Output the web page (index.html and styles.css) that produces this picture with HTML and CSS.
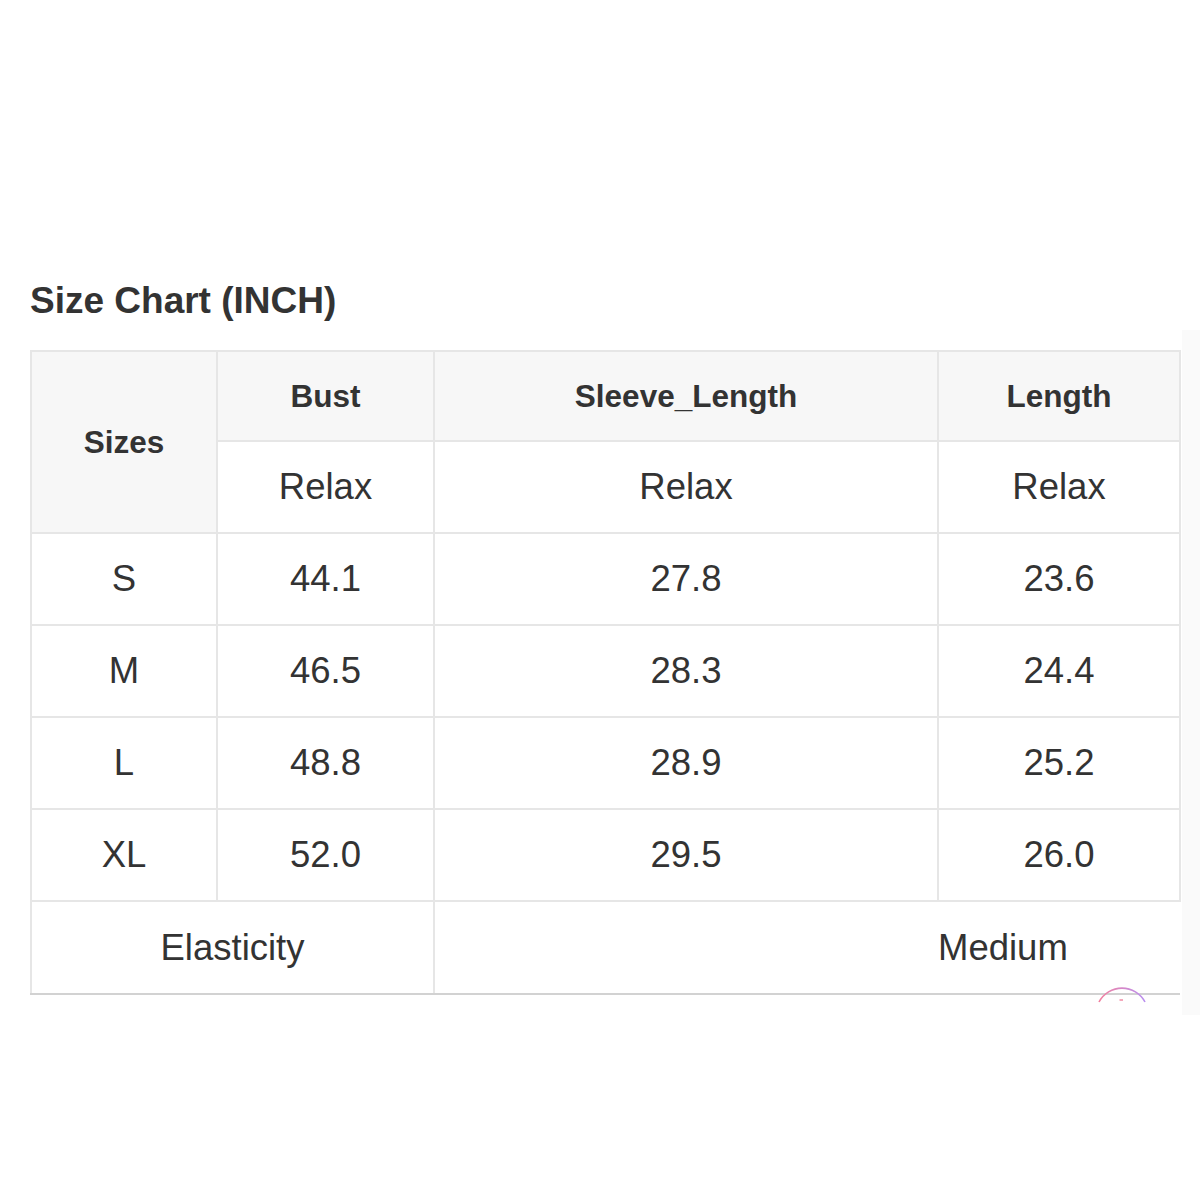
FILE: index.html
```html
<!DOCTYPE html>
<html>
<head>
<meta charset="utf-8">
<link rel="stylesheet" href="styles.css">
</head>
<body>
<main class="page">
  <h2 class="title">Size Chart (INCH)</h2>
  <div class="chart-box">
    <div class="table-clip">
      <table class="chart">
        <colgroup>
          <col class="c1"><col class="c2"><col class="c3"><col class="c4">
        </colgroup>
        <tr class="head">
          <th rowspan="2">Sizes</th>
          <th>Bust</th>
          <th>Sleeve_Length</th>
          <th>Length</th>
        </tr>
        <tr class="sub">
          <td>Relax</td><td>Relax</td><td>Relax</td>
        </tr>
        <tr><td>S</td><td>44.1</td><td>27.8</td><td>23.6</td></tr>
        <tr><td>M</td><td>46.5</td><td>28.3</td><td>24.4</td></tr>
        <tr><td>L</td><td>48.8</td><td>28.9</td><td>25.2</td></tr>
        <tr><td>XL</td><td>52.0</td><td>29.5</td><td>26.0</td></tr>
        <tr class="last">
          <td colspan="2">Elasticity</td>
          <td colspan="2" class="medium">Medium</td>
        </tr>
      </table>
      <svg class="badge" width="50" height="18" viewBox="0 0 50 18">
        <defs>
          <linearGradient id="g" x1="0" y1="0" x2="1" y2="0">
            <stop offset="0" stop-color="#f2819f"/>
            <stop offset="1" stop-color="#b98ff0"/>
          </linearGradient>
        </defs>
        <path d="M2 16 A26 26 0 0 1 48 16" fill="none" stroke="url(#g)" stroke-width="1.6"/>
        <path d="M22.5 14 H26" stroke="#f0839e" stroke-width="1.4"/>
      </svg>
    </div>
    <div class="edge"></div>
  </div>
</main>
</body>
</html>
```

FILE: styles.css
```css
html, body {
  margin: 0;
  padding: 0;
  background: #ffffff;
}

.page {
  padding: 281px 0 0 30px;
  font-family: "Liberation Sans", Arial, sans-serif;
  color: #333333;
}

.title {
  margin: 0 0 29px 0;
  font-size: 37px;
  line-height: 40px;
  font-weight: bold;
  color: #333333;
}

.chart-box {
  display: flex;
  margin-top: -20px;
}

.table-clip {
  position: relative;
  padding: 20px 3px 20px 0;
  width: 1149px;
  background: #ffffff;
}

.edge {
  width: 18px;
  background: #fafafa;
}

.chart {
  border-collapse: collapse;
  table-layout: fixed;
  width: 1149px;
}

.c1 { width: 186px; }
.c2 { width: 217px; }
.c3 { width: 504px; }
.c4 { width: 242px; }

.chart th,
.chart td {
  border: 2px solid #e6e6e6;
  height: 90px;
  padding: 0;
  text-align: center;
  vertical-align: middle;
  font-size: 36.5px;
  color: #333333;
  white-space: nowrap;
}

.chart .head th {
  height: 88px;
  background: #f7f7f7;
  font-size: 31.5px;
  font-weight: bold;
  color: #333333;
}

.chart .last td {
  height: 91px;
  border-bottom-color: #d2d2d2;
}

.chart .medium {
  text-align: left;
  padding-left: 503px;
  border-right: none;
}

.badge {
  position: absolute;
  left: 1067px;
  top: 656px;
}
```
